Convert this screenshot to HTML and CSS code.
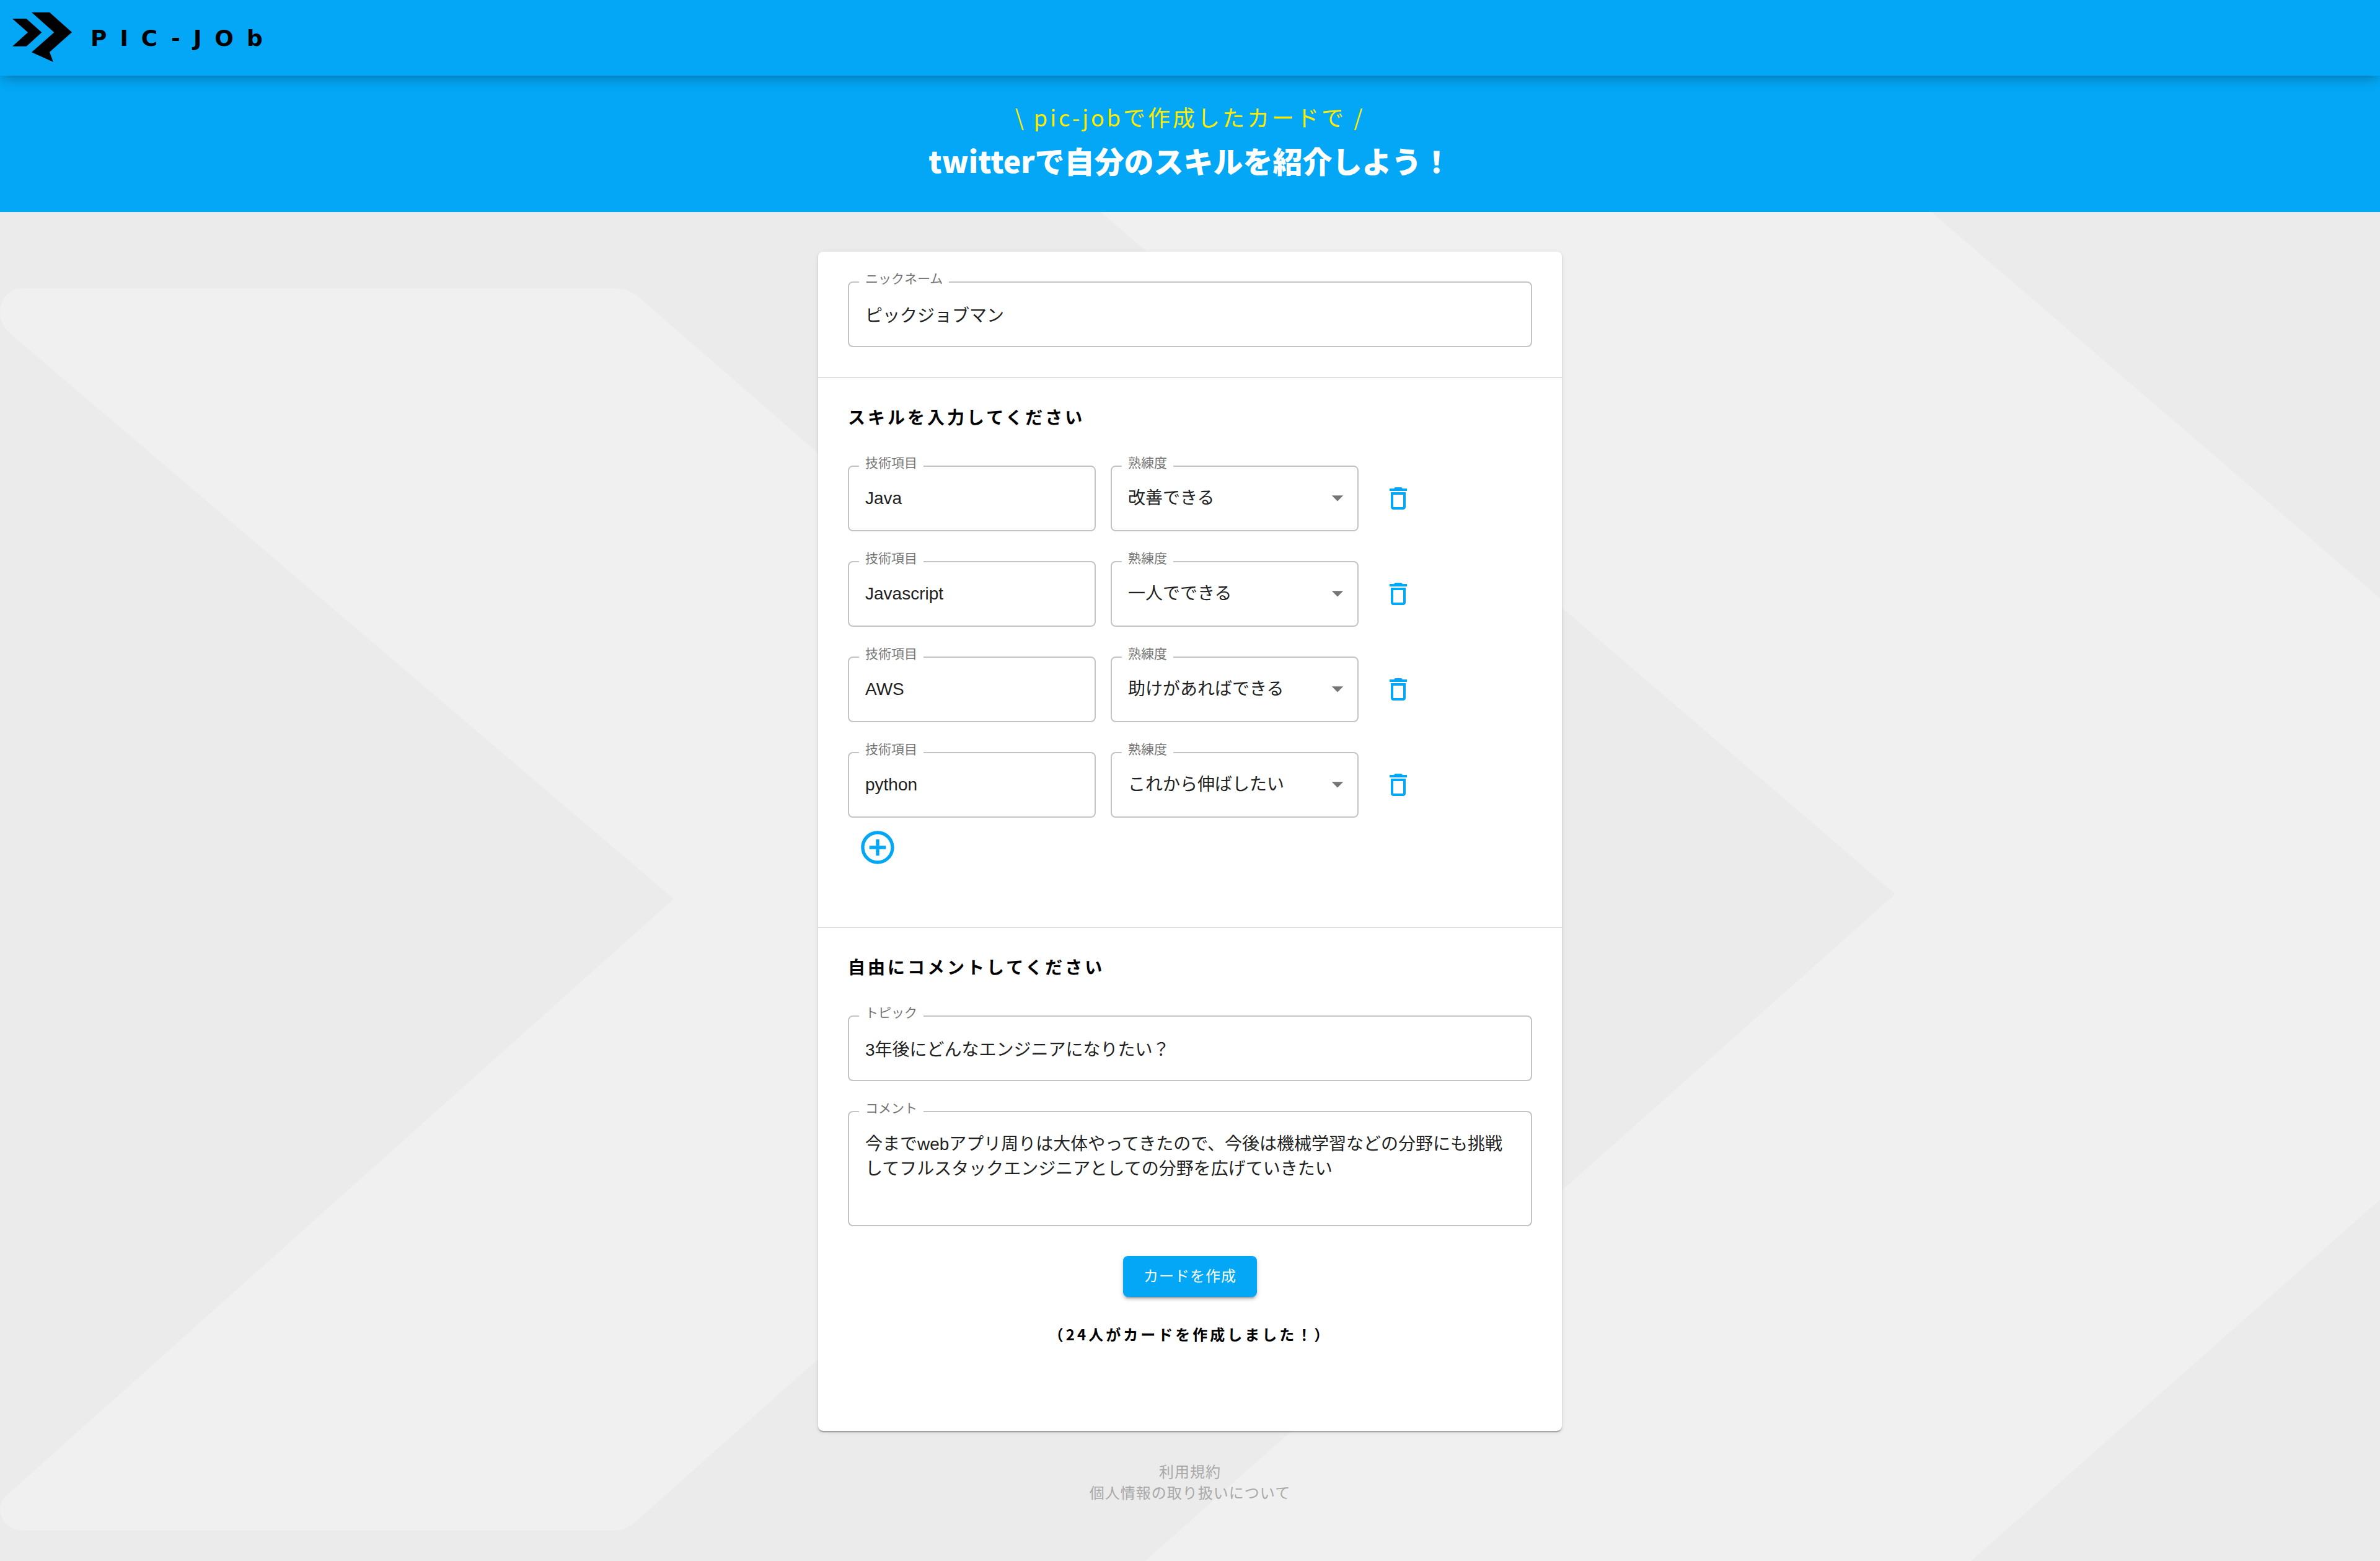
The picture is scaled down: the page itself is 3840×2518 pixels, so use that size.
FILE: index.html
```html
<!DOCTYPE html>
<html lang="ja">
<head>
<meta charset="utf-8">
<meta name="viewport" content="width=device-width, initial-scale=1">
<title>PIC-JOb</title>
<link rel="stylesheet" href="styles.css">
</head>
<body>
<header class="app-bar">
  <a class="brand" href="#">
    <svg class="brand-mark" viewBox="60 60 288 240" aria-hidden="true">
      <path d="M60 91H128L202 157L128 224H60L135 157Z"/>
      <path d="M153 60H240L348 156L240 252L258 300L153 253L262 157Z"/>
    </svg>
    <span class="brand-name">PIC-JOb</span>
  </a>
</header>

<section class="hero">
  <p class="hero-lead">\ pic-jobで作成したカードで /</p>
  <h1 class="hero-title">twitterで自分のスキルを紹介しよう！</h1>
</section>

<main class="page">
  <svg class="backdrop" viewBox="0 0 3840 2176" preserveAspectRatio="xMidYMin slice" aria-hidden="true">
    <path d="M36 123H990Q1012 123 1029 136L2150 1110L1024 2114Q1008 2127 990 2127H36Q0 2122 0 2090Q0 2080 12 2069L1087 1108L14 194Q0 180 0 162Q2 126 36 123Z"/>
    <path d="M1776 0H3116L3840 623V1593L3180 2176H1848L3058 1100Z"/>
  </svg>

  <form class="card">
    <section class="block block-name">
      <div class="field">
        <label class="field-label" for="nickname">ニックネーム</label>
        <input class="control" id="nickname" type="text" value="ピックジョブマン">
      </div>
    </section>

    <section class="block block-skills">
      <h2 class="block-title">スキルを入力してください</h2>
      <div class="skills">
        <div class="skill-row">
          <div class="field">
            <label class="field-label" for="skill-1">技術項目</label>
            <input class="control" id="skill-1" type="text" value="Java">
          </div>
          <div class="field">
            <label class="field-label" for="level-1">熟練度</label>
            <select class="control" id="level-1">
              <option selected>改善できる</option><option>一人でできる</option><option>助けがあればできる</option><option>これから伸ばしたい</option>
            </select>
            <svg class="caret" viewBox="0 0 24 24" aria-hidden="true"><path d="M7 10l5 5 5-5z"/></svg>
          </div>
          <button class="icon-button" type="button" aria-label="削除">
            <svg class="icon" viewBox="0 0 24 24" aria-hidden="true"><path d="M6 19c0 1.100.9 2 2 2h8c1.100 0 2-.9 2-2V7H6v12zM8 9h8v10H8V9zm7.500-5l-1-1h-5l-1 1H5v2h14V4z"/></svg>
          </button>
        </div>
        <div class="skill-row">
          <div class="field">
            <label class="field-label" for="skill-2">技術項目</label>
            <input class="control" id="skill-2" type="text" value="Javascript">
          </div>
          <div class="field">
            <label class="field-label" for="level-2">熟練度</label>
            <select class="control" id="level-2">
              <option>改善できる</option><option selected>一人でできる</option><option>助けがあればできる</option><option>これから伸ばしたい</option>
            </select>
            <svg class="caret" viewBox="0 0 24 24" aria-hidden="true"><path d="M7 10l5 5 5-5z"/></svg>
          </div>
          <button class="icon-button" type="button" aria-label="削除">
            <svg class="icon" viewBox="0 0 24 24" aria-hidden="true"><path d="M6 19c0 1.100.9 2 2 2h8c1.100 0 2-.9 2-2V7H6v12zM8 9h8v10H8V9zm7.500-5l-1-1h-5l-1 1H5v2h14V4z"/></svg>
          </button>
        </div>
        <div class="skill-row">
          <div class="field">
            <label class="field-label" for="skill-3">技術項目</label>
            <input class="control" id="skill-3" type="text" value="AWS">
          </div>
          <div class="field">
            <label class="field-label" for="level-3">熟練度</label>
            <select class="control" id="level-3">
              <option>改善できる</option><option>一人でできる</option><option selected>助けがあればできる</option><option>これから伸ばしたい</option>
            </select>
            <svg class="caret" viewBox="0 0 24 24" aria-hidden="true"><path d="M7 10l5 5 5-5z"/></svg>
          </div>
          <button class="icon-button" type="button" aria-label="削除">
            <svg class="icon" viewBox="0 0 24 24" aria-hidden="true"><path d="M6 19c0 1.100.9 2 2 2h8c1.100 0 2-.9 2-2V7H6v12zM8 9h8v10H8V9zm7.500-5l-1-1h-5l-1 1H5v2h14V4z"/></svg>
          </button>
        </div>
        <div class="skill-row">
          <div class="field">
            <label class="field-label" for="skill-4">技術項目</label>
            <input class="control" id="skill-4" type="text" value="python">
          </div>
          <div class="field">
            <label class="field-label" for="level-4">熟練度</label>
            <select class="control" id="level-4">
              <option>改善できる</option><option>一人でできる</option><option>助けがあればできる</option><option selected>これから伸ばしたい</option>
            </select>
            <svg class="caret" viewBox="0 0 24 24" aria-hidden="true"><path d="M7 10l5 5 5-5z"/></svg>
          </div>
          <button class="icon-button" type="button" aria-label="削除">
            <svg class="icon" viewBox="0 0 24 24" aria-hidden="true"><path d="M6 19c0 1.100.9 2 2 2h8c1.100 0 2-.9 2-2V7H6v12zM8 9h8v10H8V9zm7.500-5l-1-1h-5l-1 1H5v2h14V4z"/></svg>
          </button>
        </div>
      </div>
      <button class="icon-button" type="button" aria-label="追加">
        <svg class="icon icon-large" viewBox="0 0 24 24" aria-hidden="true"><path d="M13 7h-2v4H7v2h4v4h2v-4h4v-2h-4V7zm-1-5C6.480 2 2 6.480 2 12s4.480 10 10 10 10-4.480 10-10S17.520 2 12 2zm0 18c-4.410 0-8-3.590-8-8s3.590-8 8-8 8 3.590 8 8-3.590 8-8 8z"/></svg>
      </button>
    </section>

    <section class="block block-comment">
      <h2 class="block-title">自由にコメントしてください</h2>
      <div class="comment-fields">
        <div class="field">
          <label class="field-label" for="topic">トピック</label>
          <input class="control" id="topic" type="text" value="3年後にどんなエンジニアになりたい？">
        </div>
        <div class="field">
          <label class="field-label" for="comment">コメント</label>
          <textarea class="control control-multiline" id="comment">今までwebアプリ周りは大体やってきたので、今後は機械学習などの分野にも挑戦してフルスタックエンジニアとしての分野を広げていきたい</textarea>
        </div>
        <button class="submit" type="submit">カードを作成</button>
      </div>
      <p class="counter">（24人がカードを作成しました！）</p>
    </section>
  </form>

  <footer class="footer">
    <a class="footer-link" href="#">利用規約</a>
    <a class="footer-link" href="#">個人情報の取り扱いについて</a>
  </footer>
</main>
</body>
</html>
```

FILE: styles.css
```css
:root {
  --blue: #03a7f5;
  --noto: "Noto Sans CJK JP", sans-serif;
  --body: "Liberation Sans", "Noto Sans CJK JP", sans-serif;
}

* {
  box-sizing: border-box;
}

body {
  display: flex;
  flex-direction: column;
  min-height: 100vh;
  margin: 0;
  background: #ebebeb;
  color: #000;
  font-family: var(--noto);
}

.app-bar {
  position: relative;
  z-index: 1;
  display: flex;
  align-items: center;
  height: 122px;
  padding: 0 20px 2px;
  background: var(--blue);
  box-shadow: 0 6px 20px -4px rgba(0, 0, 0, 0.35);
}

.brand {
  display: flex;
  align-items: center;
  gap: 30px;
  color: #000;
  text-decoration: none;
}

.brand-mark {
  width: 96px;
  height: 80px;
}

.brand-name {
  padding-top: 4px;
  font: bold 36px/40px "DejaVu Sans", sans-serif;
  letter-spacing: 21px;
}

.hero {
  padding: 36px 24px 48px;
  background: var(--blue);
  text-align: center;
}

.hero-lead {
  margin: 0 0 4px;
  color: #ffeb00;
  font-size: 36px;
  line-height: 60px;
  letter-spacing: 4px;
}

.hero-title {
  margin: 0;
  color: #fff;
  font-size: 48px;
  font-weight: 900;
  line-height: 72px;
}

.page {
  position: relative;
  flex: 1;
  padding: 64px 24px;
}

.backdrop {
  position: absolute;
  inset: 0;
  width: 100%;
  height: 100%;
  fill: #f0f0f0;
}

.card {
  position: relative;
  max-width: 1200px;
  margin: 0 auto;
  border-radius: 8px;
  background: #fff;
  box-shadow:
    0 4px 2px -2px rgba(0, 0, 0, 0.2),
    0 2px 2px rgba(0, 0, 0, 0.14),
    0 2px 6px rgba(0, 0, 0, 0.12);
}

.block {
  padding: 38px 48px;
}

.block + .block {
  border-top: 2px solid #e0e0e0;
}

.block-name {
  padding: 48px;
}

.block-skills {
  padding-bottom: 80px;
}

.block-comment {
  padding-bottom: 132px;
}

.block-title {
  margin: 0 0 55px;
  font-size: 28px;
  line-height: 48px;
  letter-spacing: 4px;
}

.skills,
.comment-fields {
  display: flex;
  flex-direction: column;
  gap: 48px;
}

.skill-row {
  display: grid;
  grid-template-columns: 400px 400px auto;
  justify-content: start;
  align-items: center;
  column-gap: 24px;
}

.field {
  position: relative;
  display: flex;
}

.field-label {
  position: absolute;
  top: -18px;
  left: 18px;
  padding: 0 10px;
  background: #fff;
  color: #757575;
  font: 21px/28px var(--body);
}

.control {
  width: 100%;
  height: 106px;
  margin: 0;
  padding: 0 26px;
  border: 2px solid #c4c4c4;
  border-radius: 8px;
  outline: 0;
  appearance: none;
  background: transparent;
  color: #212121;
  font: 28px/40px var(--body);
}

.control-multiline {
  height: 186px;
  padding: 32px 26px;
  overflow: hidden;
  resize: none;
}

.caret {
  position: absolute;
  top: 30px;
  right: 12px;
  width: 44px;
  height: 44px;
  fill: #757575;
  pointer-events: none;
}

.icon-button {
  display: flex;
  padding: 16px;
  border: 0;
  background: none;
  color: var(--blue);
  cursor: pointer;
}

.icon {
  width: 48px;
  height: 48px;
  fill: currentColor;
}

.icon-large {
  width: 64px;
  height: 64px;
}

.submit {
  align-self: center;
  height: 66px;
  padding: 0 33px 4px;
  border: 0;
  border-radius: 8px;
  background: var(--blue);
  box-shadow:
    0 6px 2px -4px rgba(0, 0, 0, 0.2),
    0 4px 4px rgba(0, 0, 0, 0.14),
    0 2px 10px rgba(0, 0, 0, 0.12);
  color: #fff;
  font: 24px/40px var(--noto);
  letter-spacing: 1px;
  cursor: pointer;
}

.counter {
  margin: 36px 0 0;
  font-size: 24px;
  font-weight: bold;
  line-height: 48px;
  letter-spacing: 4px;
  text-align: center;
}

.footer {
  position: relative;
  display: flex;
  flex-direction: column;
  align-items: center;
  padding-top: 48px;
}

.footer-link {
  color: #a9a9a9;
  font-size: 24px;
  line-height: 34px;
  letter-spacing: 1px;
  text-decoration: none;
}
```
